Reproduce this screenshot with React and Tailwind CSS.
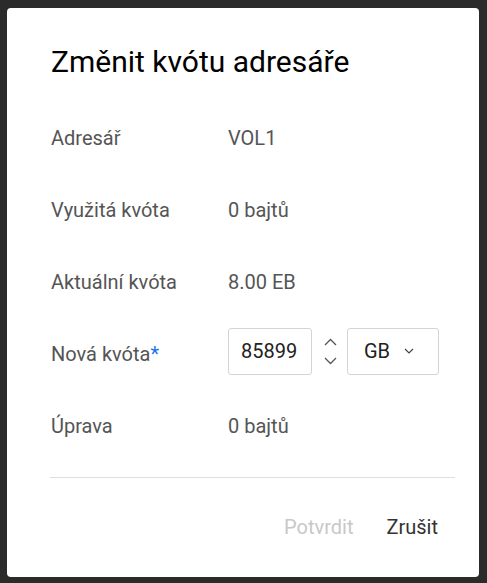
import React from "react";

function ChevronUp() {
  return (
    <svg width="13" height="8" viewBox="0 0 13 8" fill="none">
      <path d="M1 7L6.5 1.5L12 7" stroke="#555" strokeWidth="1.3" />
    </svg>
  );
}
function ChevronDown() {
  return (
    <svg width="13" height="8" viewBox="0 0 13 8" fill="none">
      <path d="M1 1L6.5 6.5L12 1" stroke="#555" strokeWidth="1.3" />
    </svg>
  );
}
function SmallChevron() {
  return (
    <svg width="10" height="6" viewBox="0 0 10 6" fill="none">
      <path d="M1 1L5 5L9 1" stroke="#444" strokeWidth="1.2" />
    </svg>
  );
}

function Row({ label, children, required }) {
  return (
    <div className="flex h-[72px] items-center">
      <div className="w-[177px] text-[20px] text-[#555]">
        {label}
        {required && <span className="text-[#1a73e8]">*</span>}
      </div>
      <div className="flex items-center text-[20px] text-[#555]">{children}</div>
    </div>
  );
}

export default function App() {
  return (
    <div
      className="min-h-[583px] w-[487px] bg-[#2b2b2b] pl-[7px] pt-[8px]"
      style={{ fontFamily: "Roboto, 'Noto Sans', sans-serif" }}
    >
      <div className="flex h-[569px] w-[472px] flex-col rounded-[4px] bg-white pl-[44px] pr-[24px]">
        <h1 className="mt-[37px] text-[30px] font-normal leading-[34px] text-[#000]">
          Změnit kvótu adresáře
        </h1>
        <div className="mt-[23px] flex flex-col">
          <Row label="Adresář">VOL1</Row>
          <Row label="Využitá kvóta">0 bajtů</Row>
          <Row label="Aktuální kvóta">8.00 EB</Row>
          <Row label="Nová kvóta" required>
            <div className="mt-[-6px] flex h-[47px] w-[84px] items-center rounded-[3px] border border-[#d4d4d4] pl-[12px] text-[20px] text-[#222]">
              85899
            </div>
            <div className="mt-[-6px] ml-[11px] flex h-[47px] w-[14px] flex-col items-center justify-center gap-[11px]">
              <ChevronUp />
              <ChevronDown />
            </div>
            <div className="mt-[-6px] ml-[10px] flex h-[47px] w-[92px] items-center rounded-[3px] border border-[#d4d4d4] pl-[16px] text-[20px] text-[#222]">
              GB
              <span className="ml-[14px] flex items-center">
                <SmallChevron />
              </span>
            </div>
          </Row>
          <Row label="Úprava">0 bajtů</Row>
        </div>
        <div className="mt-[15px] ml-[-1px] h-px bg-[#dedede]" />
        <div className="mt-[34px] flex justify-end gap-[33px] pr-[17px] text-[20px]">
          <span className="text-[#c8c8c8]">Potvrdit</span>
          <span className="text-[#333]">Zrušit</span>
        </div>
      </div>
    </div>
  );
}
